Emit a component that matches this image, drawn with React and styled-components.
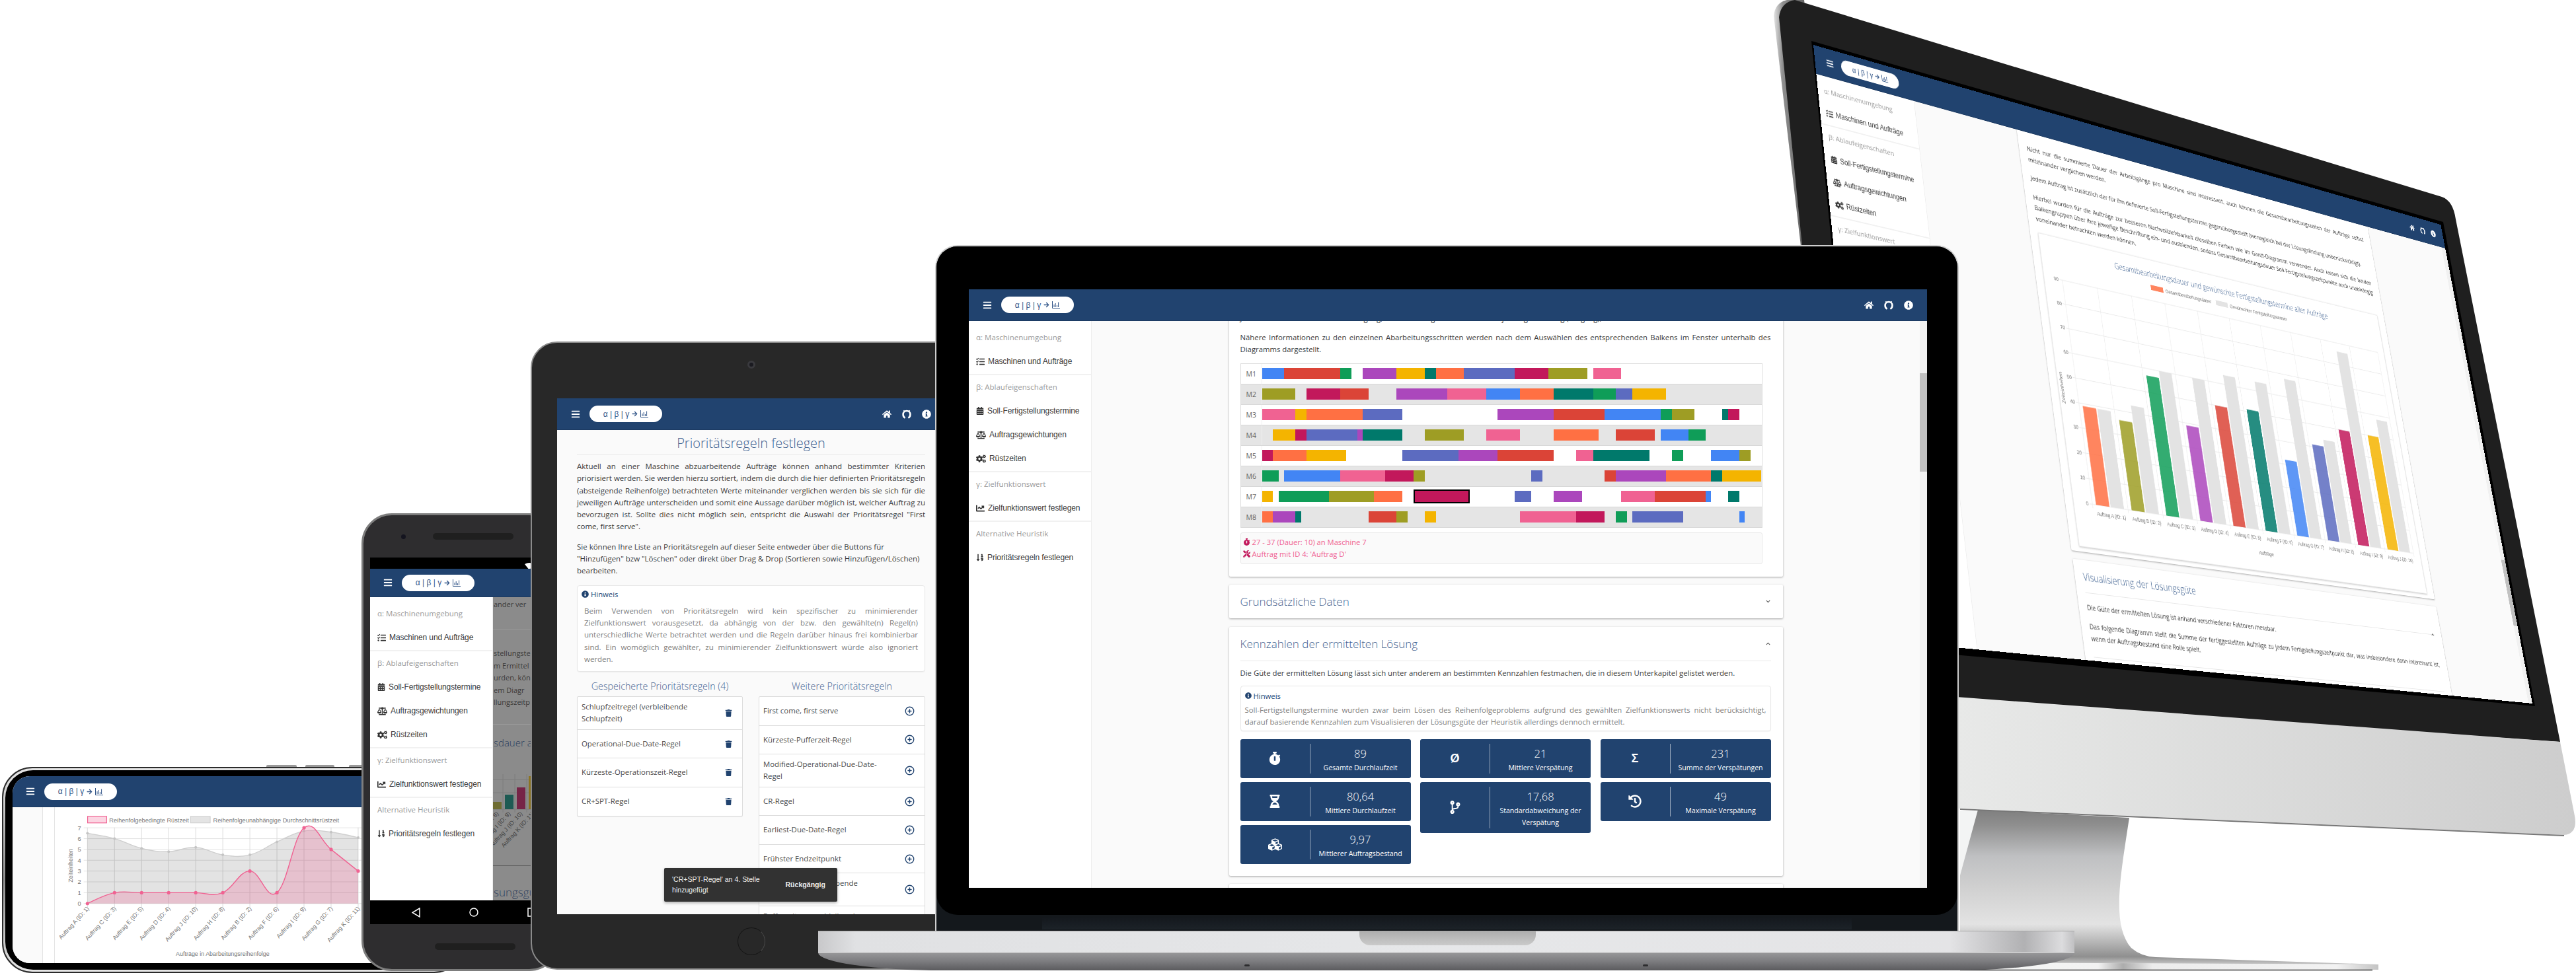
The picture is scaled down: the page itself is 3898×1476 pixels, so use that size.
import React from 'react';
import styled, { createGlobalStyle } from 'styled-components';
import {
  FaBars, FaHome, FaInfoCircle, FaArrowRight, FaTasks, FaCalendarAlt, FaBalanceScale, FaCogs,
  FaChartLine, FaSortNumericDown, FaStopwatch, FaHourglassHalf, FaCubes, FaHistory, FaCodeBranch,
  FaTrash, FaTools, FaChevronDown, FaChevronUp,
} from 'react-icons/fa';
import { CirclePlus } from 'lucide-react';

const NAVY = '#21436f';
const HEAD = '#3f6190';
const C = {
  blue: '#4285f4', red: '#db4437', green: '#0f9d58', purple: '#ab47bc', amber: '#f4b400', teal: '#00796b',
  orange: '#ff7043', indigo: '#5c6bc0', crimson: '#c2185b', olive: '#9e9d24', pink: '#f06292',
};

const Global = createGlobalStyle`
  html, body { margin: 0; padding: 0; background: #fff; }
  body { font-family: "Open Sans", "Liberation Sans", sans-serif; color: #333; }
  * { box-sizing: border-box; }
  p { margin: 0; }
`;

const Canvas = styled.div`
  position: relative;
  width: 3898px;
  height: 1476px;
  overflow: hidden;
  background: #fff;
`;

/* ---------- shared app chrome ---------- */
const HeaderBar = styled.header`
  flex: none;
  display: flex;
  align-items: center;
  height: ${p => p.$h || 48}px;
  padding: 0 21px 0 ${p => p.$pl || 21}px;
  background: ${NAVY};
  color: #fff;
  border-bottom: 1px solid #1b3960;
`;
const Burger = styled(FaBars)`
  flex: none;
  width: 14px;
  height: 14px;
`;
const LogoPill = styled.div`
  display: flex;
  align-items: center;
  justify-content: center;
  gap: 4px;
  width: 110px;
  height: 25px;
  margin-left: ${p => p.$ml || 14}px;
  border-radius: 13px;
  background: #fff;
  color: #35588a;
  font: 400 12px "Liberation Sans", sans-serif;
`;
const HeaderIcons = styled.div`
  margin-left: auto;
  display: flex;
  align-items: center;
  gap: 16px;
  font-size: 14px;
`;
const LogoChart = () => (
  <svg width="12" height="11" viewBox="0 0 12 11" fill="none" stroke="#35588a" strokeWidth="1">
    <path d="M.5 0v10.5H12M3 9V5M5.2 9V3M7.4 9V6M9.6 9V1.5" />
  </svg>
);
const GithubRing = () => (
  <svg width="14" height="14" viewBox="0 0 14 14" fill="none" stroke="#fff" strokeWidth="2.6">
    <path d="M4.6 12.6C2.6 11.5 1.6 9.5 1.6 7.4 1.6 4.2 4 2 7 2s5.4 2.2 5.4 5.4c0 2.1-1 4.1-3 5.2" />
    <path d="M2.4 1.2l1.4 1.6M11.6 1.2l-1.4 1.6" strokeWidth="1.6" />
  </svg>
);
const AppHeader = ({ h, pl, ml, iconsOnly }) => (
  <HeaderBar $h={h} $pl={pl}>
    <Burger />
    <LogoPill $ml={ml}>α | β | γ <FaArrowRight size={9} /> <LogoChart /></LogoPill>
    <HeaderIcons>
      <FaHome />
      {!iconsOnly && <GithubRing />}
      {!iconsOnly && <FaInfoCircle />}
    </HeaderIcons>
  </HeaderBar>
);

const SideColumn = styled.nav`
  flex: none;
  width: ${p => p.$w || 186}px;
  padding-top: 7px;
  background: #fff;
  border-right: 1px solid #eee;
  font: 400 12px "Liberation Sans", sans-serif;
`;
const SideSection = styled.section`
  padding-bottom: 1px;
  border-bottom: 2px solid #f1f1f1;
  &:last-child { border-bottom: 0; }
`;
const SideLabel = styled.div`
  height: 36px;
  padding-left: 11px;
  line-height: 36px;
  color: #9a9a9a;
  font-family: "Open Sans", sans-serif;
  font-size: 11.5px;
  white-space: nowrap;
`;
const SideItem = styled.div`
  display: flex;
  align-items: center;
  gap: 5px;
  height: 36px;
  padding-left: 11px;
  color: #3a3a3a;
  white-space: nowrap;
  letter-spacing: -0.1px;
  svg { flex: none; color: #333; }
`;
const Sidebar = () => (
  <SideColumn>
    <SideSection>
      <SideLabel>α: Maschinenumgebung</SideLabel>
      <SideItem><FaTasks size={13} />Maschinen und Aufträge</SideItem>
    </SideSection>
    <SideSection>
      <SideLabel>β: Ablaufeigenschaften</SideLabel>
      <SideItem><FaCalendarAlt size={12} />Soll-Fertigstellungstermine</SideItem>
      <SideItem><FaBalanceScale size={15} />Auftragsgewichtungen</SideItem>
      <SideItem><FaCogs size={15} />Rüstzeiten</SideItem>
    </SideSection>
    <SideSection>
      <SideLabel>γ: Zielfunktionswert</SideLabel>
      <SideItem><FaChartLine size={13} />Zielfunktionswert festlegen</SideItem>
    </SideSection>
    <SideSection>
      <SideLabel>Alternative Heuristik</SideLabel>
      <SideItem><FaSortNumericDown size={12} />Prioritätsregeln festlegen</SideItem>
    </SideSection>
  </SideColumn>
);

const PageBody = styled.div`
  flex: 1;
  min-height: 0;
  display: flex;
  background: #fafafa;
`;
const ScrollArea = styled.main`
  flex: 1;
  min-width: 0;
  overflow: hidden;
  display: flex;
  flex-direction: column;
  align-items: center;
`;
const ScrollTrack = styled.div`
  flex: none;
  width: 11px;
  padding-top: ${p => p.$top}px;
  background: #f1f1f1;
`;
const ScrollThumb = styled.div`
  height: ${p => p.$h}px;
  background: #c1c1c1;
`;
const Card = styled.section`
  flex: none;
  width: 838px;
  margin-top: ${p => p.$mt || 0}px;
  padding: ${p => p.$pt || 0}px 18px ${p => p.$pb || 0}px 17px;
  background: #fff;
  box-shadow: 0 1px 3px rgba(0,0,0,.35);
  border-radius: 2px;
`;
const CardHead = styled.div`
  display: flex;
  align-items: center;
  justify-content: space-between;
  height: ${p => p.$h}px;
  color: ${HEAD};
  font-size: 17px;
  font-weight: 300;
  svg { color: #555; margin-right: 1px; }
`;
const Rule = styled.hr`
  margin: ${p => p.$mt || 0}px 0 0;
  border: 0;
  border-top: 1px solid #e8e8e8;
`;
const Para = styled.p`
  margin-top: ${p => p.$mt || 0}px;
  font-size: ${p => p.$fs || 11.35}px;
  line-height: ${p => p.$lh || 18.5}px;
  text-align: ${p => (p.$left ? 'left' : 'justify')};
  color: #3b3b3b;
`;
const HintBox = styled.div`
  margin-top: ${p => p.$mt || 0}px;
  padding: ${p => p.$p || '6px 6px 3px'};
  border: 1px solid #e7e7e7;
  border-radius: 4px;
  background: #fff;
  box-shadow: 0 1px 1px rgba(0,0,0,.04);
`;
const HintHead = styled.div`
  display: flex;
  align-items: center;
  gap: 3px;
  height: 16px;
  color: ${NAVY};
  font-size: 11.3px;
`;
const HintText = styled.p`
  margin-top: 5px;
  font-size: 11.35px;
  line-height: 18.3px;
  color: #808080;
  text-align: justify;
`;
const TabletHintText = styled(HintText)`
  margin: 8px 0 0 4px;
  font-size: 11.5px;
`;

/* ---------- gantt ---------- */
const GANTT = [
  [['blue',0,4],['red',4,14],['green',14,16],['purple',18,24],['amber',24,29],['teal',29,31],['orange',31,36],['indigo',36,45],['crimson',45,51],['olive',51,58],['pink',59,64]],
  [['olive',0,6],['crimson',8,14],['red',14,19],['purple',24,33],['pink',33,40],['blue',40,46],['orange',46,52],['teal',52,59],['green',59,63],['indigo',63,66],['amber',66,72]],
  [['pink',0,6],['amber',6,8],['orange',8,18],['indigo',18,25],['purple',42,52],['red',52,61],['blue',61,71],['green',71,73],['olive',73,77],['teal',82,83],['crimson',83,85]],
  [['amber',2,6],['crimson',6,8],['indigo',8,17],['purple',17,18],['teal',18,25],['olive',29,36],['pink',40,46],['orange',52,60],['red',63,70],['blue',71,76],['green',76,79]],
  [['crimson',0,2],['orange',2,8],['amber',8,15],['indigo',25,35],['purple',35,42],['red',42,52],['pink',56,59],['teal',59,69],['green',73,75],['blue',80,85],['olive',85,87]],
  [['green',0,3],['blue',4,14],['pink',14,22],['crimson',22,27],['olive',27,29],['indigo',48,50],['red',61,63],['purple',63,72],['orange',72,80],['teal',80,82],['amber',82,89]],
  [['amber',0,2],['green',3,12],['olive',12,20],['orange',20,25],['crimson',27,37,true],['indigo',45,48],['purple',52,57],['pink',64,70],['red',70,79],['blue',79,80],['teal',83,85]],
  [['orange',0,2],['purple',2,6],['teal',6,7],['red',19,24],['olive',24,26],['amber',29,31],['pink',46,56],['crimson',56,61],['green',63,65],['indigo',66,75],['blue',85,86]],
];
const GanttBox = styled.div`
  width: 790px;
  margin-top: 11px;
  border: 1px solid #dedede;
  border-bottom: 0;
`;
const GanttRow = styled.div`
  display: flex;
  height: 31px;
  background: ${p => (p.$odd ? '#e5e5e5' : '#fff')};
  border-bottom: 1px solid #d8d8d8;
`;
const GanttLabel = styled.div`
  flex: none;
  width: 32px;
  line-height: 30px;
  padding-left: 8px;
  font-size: 10.5px;
  color: #666;
  border-right: 1px solid #f0f0f0;
`;
const GanttTrack = styled.div`
  flex: 1;
  display: grid;
  grid-template-columns: repeat(89, 1fr);
  align-items: center;
`;
const GanttBar = styled.div`
  grid-row: 1;
  grid-column: ${p => p.$s + 1} / ${p => p.$e + 1};
  height: ${p => (p.$sel ? 21 : 17)}px;
  background: ${p => C[p.$c]};
  border: ${p => (p.$sel ? '2px solid #000' : 0)};
`;
const Gantt = () => (
  <GanttBox>
    {GANTT.map((row, i) => (
      <GanttRow key={i} $odd={i % 2 === 1}>
        <GanttLabel>M{i + 1}</GanttLabel>
        <GanttTrack>
          {row.map(([c, s, e, sel]) => <GanttBar key={s} $c={c} $s={s} $e={e} $sel={sel} />)}
        </GanttTrack>
      </GanttRow>
    ))}
  </GanttBox>
);
const InfoBox = styled.div`
  width: 790px;
  margin: 7px 0 19px;
  padding: 5px 3px;
  background: #fafafa;
  border: 1px solid #e9e9e9;
  border-radius: 3px;
`;
const InfoLine = styled.div`
  display: flex;
  align-items: center;
  gap: 3px;
  height: 18px;
  color: ${C.pink};
  font-size: 11.2px;
  svg { color: ${C.crimson}; }
`;

/* ---------- KPI ---------- */
const KpiGrid = styled.div`
  display: flex;
  justify-content: space-between;
  align-items: flex-start;
  margin-top: 12px;
`;
const KpiCol = styled.div`
  display: flex;
  flex-direction: column;
  gap: 6px;
  width: 258px;
`;
const Kpi = styled.div`
  display: flex;
  align-items: stretch;
  padding: 7px 0;
  background: ${NAVY};
  border-radius: 3px;
  color: #fff;
`;
const KpiIcon = styled.div`
  flex: none;
  width: 106px;
  display: flex;
  align-items: center;
  justify-content: center;
  font: 700 18px "Liberation Sans", sans-serif;
  border-right: 1px solid rgba(255,255,255,.55);
`;
const KpiText = styled.div`
  flex: 1;
  min-width: 0;
  padding: 3px 4px 0;
  text-align: center;
`;
const KpiValue = styled.div`
  font-size: 16.5px;
  font-weight: 300;
  line-height: 24px;
`;
const KpiLabel = styled.div`
  font-size: 10.6px;
  line-height: 18px;
  letter-spacing: -0.05px;
`;
const Tile = ({ icon, value, label }) => (
  <Kpi>
    <KpiIcon>{icon}</KpiIcon>
    <KpiText><KpiValue>{value}</KpiValue><KpiLabel>{label}</KpiLabel></KpiText>
  </Kpi>
);

/* ---------- framed screen with app ---------- */
const AppPage = styled.div`
  display: flex;
  flex-direction: column;
  width: 100%;
  height: 100%;
  overflow: hidden;
  background: #fafafa;
`;
const ScrolledCard = styled(Card)`
  margin-top: -13px;
`;

const LaptopPage = () => (
  <AppPage>
    <AppHeader />
    <PageBody>
      <Sidebar />
      <ScrollArea>
        <ScrolledCard>
          <Para>Jeder Balken steht für einen Arbeitsgang, die Farben ergeben sich aus dem jeweiligen Auftrag (Vorgang), welcher bearbeitet wird.</Para>
          <Para $mt={10}>Nähere Informationen zu den einzelnen Abarbeitungsschritten werden nach dem Auswählen des entsprechenden Balkens im Fenster unterhalb des Diagramms dargestellt.</Para>
          <Gantt />
          <InfoBox>
            <InfoLine><FaStopwatch size={11} />27 - 37 (Dauer: 10) an Maschine 7</InfoLine>
            <InfoLine><FaTools size={11} />Auftrag mit ID 4: 'Auftrag D'</InfoLine>
          </InfoBox>
        </ScrolledCard>
        <Card $mt={12}>
          <CardHead $h={51}>Grundsätzliche Daten <FaChevronDown size={7} /></CardHead>
        </Card>
        <Card $mt={13} $pb={18}>
          <CardHead $h={51}>Kennzahlen der ermittelten Lösung <FaChevronUp size={7} /></CardHead>
          <Rule />
          <Para $mt={9}>Die Güte der ermittelten Lösung lässt sich unter anderem an bestimmten Kennzahlen festmachen, die in diesem Unterkapitel gelistet werden.</Para>
          <HintBox $mt={10}>
            <HintHead><FaInfoCircle size={10} />Hinweis</HintHead>
            <HintText>Soll-Fertigstellungstermine wurden zwar beim Lösen des Reihenfolgeproblems aufgrund des gewählten Zielfunktionswerts nicht berücksichtigt, darauf basierende Kennzahlen zum Visualisieren der Lösungsgüte der Heuristik allerdings dennoch ermittelt.</HintText>
          </HintBox>
          <KpiGrid>
            <KpiCol>
              <Tile icon={<FaStopwatch size={20} />} value="89" label="Gesamte Durchlaufzeit" />
              <Tile icon={<FaHourglassHalf size={20} />} value="80,64" label="Mittlere Durchlaufzeit" />
              <Tile icon={<FaCubes size={21} />} value="9,97" label="Mittlerer Auftragsbestand" />
            </KpiCol>
            <KpiCol>
              <Tile icon="Ø" value="21" label="Mittlere Verspätung" />
              <Tile icon={<FaCodeBranch size={20} />} value="17,68" label="Standardabweichung der Verspätung" />
            </KpiCol>
            <KpiCol>
              <Tile icon="Σ" value="231" label="Summe der Verspätungen" />
              <Tile icon={<FaHistory size={20} />} value="49" label="Maximale Verspätung" />
            </KpiCol>
          </KpiGrid>
        </Card>
        <Card $mt={12} $pt={40} />
      </ScrollArea>
      <ScrollTrack $top={79}><ScrollThumb $h={149} /></ScrollTrack>
    </PageBody>
  </AppPage>
);

/* ---------- monitor bar chart ---------- */
const BARS = [
  ['A', 1, 'orange', 39, 39], ['B', 2, 'olive', 36, 43], ['C', 3, 'green', 57, 60], ['D', 4, 'purple', 39, 60],
  ['E', 5, 'red', 50, 64], ['F', 6, 'teal', 51, 64], ['G', 7, 'blue', 32, 68], ['H', 8, 'indigo', 41, 44],
  ['I', 9, 'crimson', 50, 86], ['J', 10, 'amber', 50, 58],
];
const ChartBox = styled.div`
  height: 509px;
  margin-top: 15px;
  background: #fff;
  border: 1px solid #eee;
  box-shadow: 0 1px 3px rgba(0,0,0,.25);
  svg { display: block; }
`;
const BarChart = () => {
  const x0 = 38, x1 = 785, y0 = 438, y9 = 72;
  const step = (x1 - x0) / 10;
  const py = v => y0 - ((y0 - y9) * v) / 90;
  return (
    <ChartBox>
      <svg width="803" height="507" viewBox="0 0 803 507" fontFamily="Liberation Sans, sans-serif">
        <text x="412" y="30" textAnchor="middle" fontFamily="Open Sans" fontSize="14" fontWeight="300" fill={HEAD}>Gesamtbearbeitungsdauer und gewünschte Fertigstellungstermine aller Aufträge</text>
        <rect x="235" y="44" width="28" height="9" fill={C.orange} opacity=".85" />
        <text x="268" y="52" fontSize="9" fill="#777">Gesamtbearbeitungsdauer</text>
        <rect x="385" y="44" width="28" height="9" fill="#e3e3e3" />
        <text x="418" y="52" fontSize="9" fill="#777">Gewünschter Fertigstellungstermin</text>
        {Array.from({ length: 10 }, (_, i) => (
          <g key={i}>
            <line x1={x0 - 6} x2={x1} y1={py(i * 10)} y2={py(i * 10)} stroke="#e8e8e8" />
            <text x={x0 - 8} y={py(i * 10) + 3} textAnchor="end" fontSize="9" fill="#777">{i * 10}</text>
          </g>
        ))}
        {Array.from({ length: 11 }, (_, i) => (
          <line key={i} x1={x0 + step * i} x2={x0 + step * i} y1={y9} y2={y0 + 6} stroke="#ececec" />
        ))}
        {BARS.map(([n, id, c, a, b], i) => (
          <g key={n}>
            <rect x={x0 + step * i + 7.5} y={py(a)} width="28" height={y0 - py(a)} fill={C[c]} opacity=".85" />
            <rect x={x0 + step * i + 38} y={py(b)} width="28" height={y0 - py(b)} fill="#e3e3e3" />
            <text x={x0 + step * i + step / 2} y={y0 + 17} textAnchor="middle" fontSize="8.5" fill="#777">Auftrag {n} (ID: {id})</text>
          </g>
        ))}
        <text x="412" y={y0 + 42} textAnchor="middle" fontSize="9" fill="#777">Aufträge</text>
        <text transform={`translate(10 ${(y0 + y9) / 2}) rotate(-90)`} textAnchor="middle" fontSize="9" fill="#777">Zeiteinheiten</text>
      </svg>
    </ChartBox>
  );
};

const MonitorPage = () => (
  <AppPage>
    <AppHeader />
    <PageBody>
      <Sidebar />
      <ScrollArea>
        <Card $pt={20} $pb={8}>
          <Para>Nicht nur die summierte Dauer der Arbeitsgänge pro Maschine sind interessant, auch können die Gesamtbearbeitungszeiten der Aufträge selbst miteinander verglichen werden.</Para>
          <Para $mt={14}>Jedem Auftrag ist zusätzlich der für ihn definierte Soll-Fertigstellungstermin gegenübergestellt (wenngleich bei der Lösungsfindung unberücksichtigt).</Para>
          <Para $mt={14}>Hierbei wurden für die Aufträge zur besseren Nachvollziehbarkeit dieselben Farben wie im Gantt-Diagramm verwendet. Auch lassen sich die beiden Balkengruppen über ihre jeweilige Beschriftung ein- und ausblenden, sodass Gesamtbearbeitungsdauer Soll-Fertigstellungszeitpunkte auch unabhängig voneinander betrachten werden können.</Para>
          <BarChart />
        </Card>
        <Card $mt={13} $pb={40}>
          <CardHead $h={50}>Visualisierung der Lösungsgüte <span /></CardHead>
          <CardHead $h={0}><span /><FaChevronUp size={7} /></CardHead>
          <Rule />
          <Para $mt={13}>Die Güte der ermittelten Lösung ist anhand verschiedener Faktoren messbar.</Para>
          <Para $mt={10}>Das folgende Diagramm stellt die Summe der fertiggestellten Aufträge zu jedem Fertigstellungszeitpunkt dar, was insbesondere dann interessant ist, wenn der Auftragsbestand eine Rolle spielt.</Para>
          <Rule $mt={18} />
        </Card>
      </ScrollArea>
      <ScrollTrack $top={600}><ScrollThumb $h={120} /></ScrollTrack>
    </PageBody>
  </AppPage>
);

/* ---------- monitor ---------- */
const Chassis = styled.svg`
  position: absolute;
  left: 0;
  top: 0;
`;
const MonitorBody = () => (
  <Chassis width="3898" height="1476" viewBox="0 0 3898 1476">
    <defs>
      <linearGradient id="chin" x1="2960" x2="3898" y1="0" y2="0" gradientUnits="userSpaceOnUse">
        <stop offset="0" stopColor="#e8e9e8" /><stop offset="1" stopColor="#cdcdcd" />
      </linearGradient>
      <linearGradient id="neck" x1="0" x2="0" y1="1226" y2="1460" gradientUnits="userSpaceOnUse">
        <stop offset="0" stopColor="#7f7f7f" /><stop offset=".1" stopColor="#8f8f8f" /><stop offset=".3" stopColor="#bfc0c2" />
        <stop offset=".5" stopColor="#d0d0d0" /><stop offset=".74" stopColor="#e3e3e3" /><stop offset=".86" stopColor="#b4b4b4" />
        <stop offset=".95" stopColor="#8f8f8f" /><stop offset="1" stopColor="#c8c8c8" />
      </linearGradient>
      <linearGradient id="foot" x1="2966" x2="3599" y1="0" y2="0" gradientUnits="userSpaceOnUse">
        <stop offset="0" stopColor="#f4f6f5" /><stop offset=".33" stopColor="#f2f2f2" /><stop offset=".39" stopColor="#acacac" />
        <stop offset=".46" stopColor="#ececec" /><stop offset=".9" stopColor="#f2f2f2" /><stop offset="1" stopColor="#c4c4c4" />
      </linearGradient>
      <linearGradient id="rim" x1="2684" x2="2730" y1="0" y2="0" gradientUnits="userSpaceOnUse">
        <stop offset="0" stopColor="#e4e4e4" /><stop offset=".3" stopColor="#8e8e8e" /><stop offset="1" stopColor="#666" />
      </linearGradient>
    </defs>
    <path d="M2684 24Q2686 4 2704 0L2730 0L2790 500L2740 500Z" fill="url(#rim)" />
    <path d="M2692 26Q2695 3 2716 0L3695 298Q3712 304 3716 332L3874 1123L2800 1050L2740 500Z" fill="#1f1f1f" />
    <path d="M2741 62L3697 336L3836 1069L2832 980Z" fill="#000" />
    <path d="M2966 1228L2993 1228L2966 1325Z" fill="#f3f4f4" />
    <path d="M2993 1226L3222 1238C3208 1330 3195 1400 3225 1435Q3240 1448 3262 1449L3599 1460L2966 1458L2966 1325Z" fill="url(#neck)" />
    <path d="M2966 1457L3599 1460L3599 1468L2966 1468Z" fill="url(#foot)" />
    <path d="M2966 1468.5L3590 1468.5" stroke="#3d3d3d" strokeWidth="1.5" />
    <path d="M2786 1042L3874 1123L3896 1235Q3901 1262 3880 1264L2966 1224L2800 1220Z" fill="url(#chin)" />
    <path d="M2966 1225L3880 1265" stroke="#777" strokeWidth="2" fill="none" />
  </Chassis>
);
const TiltedScreen = styled.div`
  position: absolute;
  left: 0;
  top: 0;
  width: ${p => p.$w}px;
  height: ${p => p.$h}px;
  transform-origin: 0 0;
`;
function homography(W, H, [[x0, y0], [x1, y1], [x2, y2], [x3, y3]]) {
  const dx1 = x1 - x2, dx2 = x3 - x2, sx = x0 - x1 + x2 - x3;
  const dy1 = y1 - y2, dy2 = y3 - y2, sy = y0 - y1 + y2 - y3;
  const den = dx1 * dy2 - dx2 * dy1;
  const g = (sx * dy2 - dx2 * sy) / den;
  const h = (dx1 * sy - sx * dy1) / den;
  const a = x1 - x0 + g * x1, b = x3 - x0 + h * x3;
  const d = y1 - y0 + g * y1, e = y3 - y0 + h * y3;
  return `matrix3d(${a / W},${d / W},0,${g / W},${b / H},${e / H},0,${h / H},0,0,1,0,${x0},${y0},0,1)`;
}

/* ---------- landscape phone ---------- */
const IPhoneShell = styled.div`
  position: absolute;
  left: 3px;
  top: 1161px;
  width: 700px;
  height: 312px;
  padding: 3px;
  border: 2px solid #2b2b2b;
  border-radius: 46px;
  background: linear-gradient(#e6e6e6, #8d8d8d 55%, #e6e6e6);
`;
const IPhoneInner = styled.div`
  height: 100%;
  padding: 9px 0 10px 11px;
  border-radius: 42px;
  background: #000;
`;
const IPhoneScreen = styled.div`
  display: flex;
  flex-direction: column;
  height: 100%;
  overflow: hidden;
  border-radius: 26px 0 0 26px;
  background: #fff;
`;
const SideKey = styled.div`
  position: absolute;
  left: ${p => p.$x}px;
  top: 1158px;
  width: ${p => p.$w}px;
  height: 3px;
  background: #999;
  border-radius: 2px 2px 0 0;
`;
const PhoneChartRow = styled.div`
  flex: 1;
  min-height: 0;
  display: flex;
`;
const Gutter = styled.div`
  flex: none;
  width: ${p => p.$w}px;
  background: ${p => p.$bg};
  border-right: 1px solid #e4e4e4;
`;
const spline = pts => {
  let d = `M${pts[0][0]} ${pts[0][1]}`;
  for (let i = 0; i < pts.length - 1; i++) {
    const p0 = pts[i - 1] || pts[i], p1 = pts[i], p2 = pts[i + 1], p3 = pts[i + 2] || p2;
    const t = 0.2;
    d += `C${p1[0] + (p2[0] - p0[0]) * t} ${p1[1] + (p2[1] - p0[1]) * t} ${p2[0] - (p3[0] - p1[0]) * t} ${p2[1] - (p3[1] - p1[1]) * t} ${p2[0]} ${p2[1]}`;
  }
  return d;
};
const PHONE_LABELS = ['A (ID: 1)', 'C (ID: 3)', 'E (ID: 5)', 'D (ID: 4)', 'J (ID: 10)', 'H (ID: 8)', 'B (ID: 2)', 'F (ID: 6)', 'I (ID: 9)', 'G (ID: 7)', 'K (ID: 11)'];
const AreaChart = () => {
  const px = i => 132.7 + i * 41.3;
  const py = v => 1372 - v * 16.5;
  const pink = [0, 1, 1, 1, 1, 1, 3, 1, 7, 5, 3].map((v, i) => [px(i), py(v)]);
  const gray = [6.5, 6, 5.1, 4.8, 5.2, 4.5, 4.5, 5.7, 6.7, 6.6, 6.1].map((v, i) => [px(i), py(v)]);
  const close = ` L${px(10)} 1372 L${px(0)} 1372Z`;
  return (
    <svg width="620" height="230" viewBox="83 1226 620 230" fontFamily="Liberation Sans, sans-serif">
      <rect x="133" y="1239" width="29" height="10" fill="#fbd5e2" stroke={C.pink} strokeWidth="1.2" />
      <text x="166" y="1248" fontSize="9.3" fill="#777">Reihenfolgebedingte Rüstzeit</text>
      <rect x="290" y="1239" width="30" height="10" fill="#e4e4e4" stroke="#ccc" />
      <text x="324.5" y="1248" fontSize="9.3" fill="#777">Reihenfolgeunabhängige Durchschnittsrüstzeit</text>
      {[0, 1, 2, 3, 4, 5, 6, 7].map(v => (
        <g key={v}>
          <line x1="127" x2="560" y1={py(v)} y2={py(v)} stroke="#e3e3e3" />
          <text x="123" y={py(v) + 3.5} textAnchor="end" fontSize="9.5" fill="#777">{v}</text>
        </g>
      ))}
      {pink.map((p, i) => <line key={i} x1={p[0]} x2={p[0]} y1="1256" y2="1378" stroke="#dcdcdc" />)}
      <path d={spline(gray) + close} fill="rgba(0,0,0,.11)" />
      <path d={spline(gray)} fill="none" stroke="#cfcfcf" strokeWidth="1.4" />
      {gray.map((p, i) => <circle key={i} cx={p[0]} cy={p[1]} r="2" fill="#c4c4c4" />)}
      <path d={spline(pink) + close} fill="rgba(240,98,146,.26)" />
      <path d={spline(pink)} fill="none" stroke={C.pink} strokeWidth="1.4" />
      {pink.map((p, i) => <circle key={i} cx={p[0]} cy={p[1]} r="2.6" fill={C.pink} />)}
      {pink.map((p, i) => (
        <text key={i} transform={`translate(${p[0] + 3} 1380) rotate(-48)`} textAnchor="end" fontSize="9" fill="#777">Auftrag {PHONE_LABELS[i]}</text>
      ))}
      <text x="339" y="1452" textAnchor="middle" fontSize="9" fill="#777">Aufträge in Abarbeitungsreihenfolge</text>
      <text transform="translate(110 1314) rotate(-90)" textAnchor="middle" fontSize="9" fill="#777">Zeiteinheiten</text>
    </svg>
  );
};

/* ---------- android ---------- */
const AndroidShell = styled.div`
  position: absolute;
  left: 547px;
  top: 777px;
  width: 300px;
  height: 693px;
  display: flex;
  flex-direction: column;
  padding-left: 10px;
  background: #2e2d2f;
  border: 3px solid #7d7d7d;
  border-radius: 46px;
`;
const AndroidBezel = styled.div`
  flex: none;
  display: flex;
  align-items: center;
  gap: 41px;
  height: ${p => p.$h}px;
  padding-left: ${p => p.$pl}px;
`;
const Lens = styled.div`
  width: 7px;
  height: 7px;
  border-radius: 50%;
  background: #14141f;
`;
const SpeakerSlot = styled.div`
  width: 122px;
  height: 10px;
  border-radius: 5px;
  background: #1f1f1f;
`;
const AndroidScreen = styled.div`
  flex: none;
  display: flex;
  flex-direction: column;
  width: 287px;
  height: 555px;
`;
const StatusBar = styled.div`
  flex: none;
  height: 17px;
  padding: 2px 0 0 234px;
  background: #000;
`;
const DrawerRow = styled.div`
  flex: none;
  height: 459px;
  display: flex;
  overflow: hidden;
`;
const DimPane = styled.div`
  flex: 1;
  min-width: 0;
  padding-top: 2px;
  overflow: hidden;
  background: #8b8b8b;
  color: #3a3a3a;
  font-size: 10.5px;
  white-space: nowrap;
`;
const DimLine = styled.div`
  height: 18.4px;
  line-height: 18.4px;
  margin-top: ${p => p.$mt || 0}px;
  padding-left: 1px;
  color: ${p => p.$c || 'inherit'};
  font-size: ${p => p.$fs || 11}px;
  font-weight: ${p => p.$fw || 400};
`;
const DimDivider = styled.div`
  height: 1px;
  margin-top: ${p => p.$mt}px;
  background: ${p => p.$c || '#9b9b9b'};
`;
const DimChartWrap = styled.div`
  margin-top: 38px;
  svg { display: block; }
`;
const NavBar = styled.div`
  flex: none;
  height: 36px;
  display: flex;
  align-items: center;
  gap: 74px;
  padding-left: 63px;
  background: #000;
  svg { flex: none; }
`;
const DimChart = () => (
  <DimChartWrap>
    <svg width="90" height="140" viewBox="746 1172 90 140" fontFamily="Liberation Sans, sans-serif">
      {[1180, 1200, 1225].map(y => <line key={y} x1="746" x2="836" y1={y} y2={y} stroke="#7d7d7d" />)}
      {[761, 779, 797].map(x => <line key={x} x1={x} x2={x} y1="1172" y2="1230" stroke="#7d7d7d" />)}
      <rect x="746" y="1214" width="13" height="11" fill="#6f6d33" />
      <rect x="764" y="1203" width="13" height="22" fill="#1d5a53" />
      <rect x="782" y="1192" width="13" height="33" fill="#762447" />
      <rect x="800" y="1175" width="13" height="50" fill="#8d7420" />
      {['H (ID: 8)', 'I (ID: 9)', 'J (ID: 10)', 'K (ID: 11)'].map((t, i) => (
        <text key={t} transform={`translate(${755 + i * 18} 1232) rotate(-48)`} textAnchor="end" fontSize="9" fill="#3f3f3f">Auftrag {t}</text>
      ))}
    </svg>
  </DimChartWrap>
);

/* ---------- tablet ---------- */
const TabletShell = styled.div`
  position: absolute;
  left: 803px;
  top: 517px;
  width: 680px;
  height: 951px;
  padding-left: 38px;
  background: #282828;
  border: 2px solid #8b8b8b;
  border-radius: 40px;
`;
const TabletBezel = styled.div`
  height: ${p => p.$h}px;
  width: 587px;
  display: flex;
  align-items: center;
  justify-content: center;
`;
const TabletCam = styled.div`
  width: 12px;
  height: 12px;
  margin-bottom: 18px;
  border-radius: 50%;
  border: 3px solid #3a3a3e;
  background: #1a1a20;
`;
const HomeRing = styled.div`
  width: 42px;
  height: 42px;
  margin-bottom: 2px;
  border-radius: 50%;
  border: 1.5px solid #151515;
  border-right-color: #4b4b4b;
`;
const TabletScreen = styled.div`
  position: relative;
  display: flex;
  flex-direction: column;
  width: 587px;
  height: 781px;
  overflow: hidden;
  background: #fafafa;
`;
const TabletBody = styled.div`
  padding: 0 30px;
`;
const TabletTitle = styled.h1`
  margin: 0;
  height: 38px;
  line-height: 39px;
  text-align: center;
  font-size: 20px;
  font-weight: 300;
  color: ${HEAD};
  border-bottom: 1px solid #e9e9e9;
`;
const ListGrid = styled.div`
  display: grid;
  grid-template-columns: 251px 252px;
  gap: 24px;
  margin-top: 12px;
`;
const ListTitle = styled.h2`
  margin: 0;
  height: 25px;
  line-height: 20px;
  text-align: center;
  font-size: 14.3px;
  font-weight: 300;
  color: ${HEAD};
`;
const RuleList = styled.div`
  border: 1px solid #ddd;
  border-radius: 2px;
  background: #fff;
  box-shadow: 0 1px 1px rgba(0,0,0,.06);
`;
const RuleRow = styled.div`
  display: flex;
  align-items: center;
  justify-content: space-between;
  min-height: 43.5px;
  padding: 6px 15px 6px 6px;
  border-bottom: 1px solid #ddd;
  font-size: 11.4px;
  line-height: 18.3px;
  color: #4a4a4a;
  &:last-child { border-bottom: 0; }
  svg { flex: none; color: ${NAVY}; margin-left: 20px; }
`;
const Snackbar = styled.div`
  position: absolute;
  left: 162px;
  top: 711px;
  width: 262px;
  height: 51px;
  display: flex;
  align-items: center;
  justify-content: space-between;
  padding: 0 18px 0 12px;
  background: #323232;
  color: #ededed;
  border-radius: 2px;
  font: 400 10.6px/15.5px "Liberation Sans", sans-serif;
  box-shadow: 0 2px 4px rgba(0,0,0,.3);
`;
const SnackText = styled.span`
  width: 150px;
`;
const SnackAction = styled.span`
  font-weight: 700;
`;

/* ---------- laptop ---------- */
const LaptopLid = styled.div`
  position: absolute;
  left: 1415px;
  top: 371px;
  width: 1549px;
  height: 1038px;
  display: flex;
  flex-direction: column;
  border: 2px solid #cfcfcf;
  border-bottom: 0;
  border-radius: 34px 34px 0 0;
  background: #14181c;
`;
const LaptopBezel = styled.div`
  flex: none;
  height: 1012px;
  padding: 65px 46px 39px 49px;
  background: #000;
  border-radius: 32px;
`;
const LaptopScreen = styled.div`
  width: 1450px;
  height: 906px;
`;
const Hinge = styled.div`
  flex: 1;
  margin: 4px 160px 2px;
  background: linear-gradient(#14181d, #1c2228);
`;
const LaptopBase = styled.div`
  position: absolute;
  left: 1238px;
  top: 1409px;
  width: 1901px;
  height: 60px;
  display: flex;
  flex-direction: column;
`;
const BaseTop = styled.div`
  position: relative;
  flex: none;
  height: 33px;
  border-top: 1px solid #a8a8a8;
  border-bottom: 1px solid #f3f3f3;
  background: linear-gradient(90deg, #c8c8ca 0%, #e0e1e3 3%, #e6e7e9 50%, #e4e4e6 90%, #b1b1b3 96%, #dcdcde 99%, #c0c0c2 100%);
`;
const Notch = styled.div`
  position: absolute;
  left: 819px;
  top: 0;
  width: 267px;
  height: 21px;
  background: linear-gradient(#aeaeae, #cacaca);
  border-radius: 0 0 16px 16px;
`;
const BaseBottom = styled.div`
  flex: 1;
  display: flex;
  justify-content: center;
  align-items: flex-end;
  gap: 595px;
  padding-bottom: 6px;
  border-radius: 0 0 190px 190px / 0 0 27px 27px;
  background: linear-gradient(#98989a, #7f7f82 45%, #5b5b5e);
`;
const Pinhole = styled.div`
  width: 8px;
  height: 3px;
  border-radius: 2px;
  background: #2c2c2e;
`;

const Rules1 = ['Schlupfzeitregel (verbleibende Schlupfzeit)', 'Operational-Due-Date-Regel', 'Kürzeste-Operationszeit-Regel', 'CR+SPT-Regel'];
const Rules2 = ['First come, first serve', 'Kürzeste-Pufferzeit-Regel', 'Modified-Operational-Due-Date-Regel', 'CR-Regel', 'Earliest-Due-Date-Regel', 'Frühster Endzeitpunkt', 'Schlupfzeit je verbleibende Operation (S/OPN)', 'Pufferzeit pro verbleibendem Arbeitsgang'];

export default function App() {
  const tilt = homography(1450, 906, [[2744, 68], [3693, 340], [3832, 1065], [2835, 968]]);
  return (
    <Canvas>
      <Global />
      <MonitorBody />
      <TiltedScreen $w={1450} $h={906} style={{ transform: tilt }}><MonitorPage /></TiltedScreen>

      <SideKey $x={403} $w={46} />
      <SideKey $x={462} $w={44} />
      <SideKey $x={528} $w={30} />
      <IPhoneShell>
        <IPhoneInner>
          <IPhoneScreen>
            <AppHeader h={47} pl={20} ml={14} iconsOnly />
            <PhoneChartRow>
              <Gutter $w={46} $bg="#fafafa" />
              <Gutter $w={18} $bg="#fff" />
              <AreaChart />
            </PhoneChartRow>
          </IPhoneScreen>
        </IPhoneInner>
      </IPhoneShell>

      <AndroidShell>
        <AndroidBezel $h={64} $pl={47}><Lens /><SpeakerSlot /></AndroidBezel>
        <AndroidScreen>
          <StatusBar>
            <svg width="14" height="11" viewBox="0 0 14 11"><path d="M0 2Q7-2 14 2L7 11Z" fill="#fff" /></svg>
          </StatusBar>
          <AppHeader h={43} pl={20} ml={14} iconsOnly />
          <DrawerRow>
            <Sidebar />
            <DimPane>
              <DimLine>ander ver</DimLine>
              <DimDivider $mt={29} />
              <DimLine $mt={26}>stellungster</DimLine>
              <DimLine>m Ermittel</DimLine>
              <DimLine>urden, kön</DimLine>
              <DimLine>em  Diagr</DimLine>
              <DimLine>llungszeitp</DimLine>
              <DimDivider $mt={24} />
              <DimLine $mt={18} $fs={15} $c="#2f425e" $fw={300}>sdauer all</DimLine>
              <DimChart />
              <DimDivider $mt={-2} $c="#5f5f5f" />
              <DimLine $mt={31} $fs={17} $c="#2f425e" $fw={300}>sungsgüte</DimLine>
            </DimPane>
          </DrawerRow>
          <NavBar>
            <svg width="13" height="15" viewBox="0 0 13 15"><path d="M12 1L1 7.5 12 14Z" fill="none" stroke="#fff" strokeWidth="1.5" /></svg>
            <svg width="14" height="14" viewBox="0 0 14 14"><circle cx="7" cy="7" r="6" fill="none" stroke="#fff" strokeWidth="1.5" /></svg>
            <svg width="13" height="14" viewBox="0 0 13 14"><rect x="1" y="1" width="11" height="12" fill="none" stroke="#fff" strokeWidth="1.5" /></svg>
          </NavBar>
        </AndroidScreen>
        <AndroidBezel $h={68} $pl={98}><SpeakerSlot /></AndroidBezel>
      </AndroidShell>

      <TabletShell>
        <TabletBezel $h={84}><TabletCam /></TabletBezel>
        <TabletScreen>
          <AppHeader />
          <TabletBody>
            <TabletTitle>Prioritätsregeln festlegen</TabletTitle>
            <Para $mt={8} $fs={11.5} $lh={18.3}>Aktuell an einer Maschine abzuarbeitende Aufträge können anhand bestimmter Kriterien priorisiert werden. Sie werden hierzu sortiert, indem die durch die hier definierten Prioritätsregeln (absteigende Reihenfolge) betrachteten Werte miteinander verglichen werden bis sie sich für die jeweiligen Aufträge unterscheiden und somit eine Aussage darüber möglich ist, welcher Auftrag zu bevorzugen ist. Sollte dies nicht möglich sein, entspricht die Auswahl der Prioritätsregel "First come, first serve".</Para>
            <Para $mt={12} $fs={11.5} $lh={18.3} $left>Sie können Ihre Liste an Prioritätsregeln auf dieser Seite entweder über die Buttons für "Hinzufügen" bzw "Löschen" oder direkt über Drag &amp; Drop (Sortieren sowie Hinzufügen/Löschen) bearbeiten.</Para>
            <HintBox $mt={12} $p="5px 10px 9px 6px">
              <HintHead><FaInfoCircle size={11} />Hinweis</HintHead>
              <TabletHintText>Beim Verwenden von Prioritätsregeln wird kein spezifischer zu minimierender Zielfunktionswert vorausgesetzt, da abhängig von der bzw. den gewählte(n) Regel(n) unterschiedliche Werte betrachtet werden und die Regeln darüber hinaus frei kombinierbar sind. Ein womöglich gewählter, zu minimierender Zielfunktionswert würde also ignoriert werden.</TabletHintText>
            </HintBox>
            <ListGrid>
              <div>
                <ListTitle>Gespeicherte Prioritätsregeln (4)</ListTitle>
                <RuleList>
                  {Rules1.map(r => <RuleRow key={r}><span>{r}</span><FaTrash size={11} /></RuleRow>)}
                </RuleList>
              </div>
              <div>
                <ListTitle>Weitere Prioritätsregeln</ListTitle>
                <RuleList>
                  {Rules2.map(r => <RuleRow key={r}><span>{r}</span><CirclePlus size={15} strokeWidth={2.2} /></RuleRow>)}
                </RuleList>
              </div>
            </ListGrid>
          </TabletBody>
          <Snackbar><SnackText>'CR+SPT-Regel' an 4. Stelle hinzugefügt</SnackText><SnackAction>Rückgängig</SnackAction></Snackbar>
        </TabletScreen>
        <TabletBezel $h={84}><HomeRing /></TabletBezel>
      </TabletShell>

      <LaptopLid>
        <LaptopBezel><LaptopScreen><LaptopPage /></LaptopScreen></LaptopBezel>
        <Hinge />
      </LaptopLid>
      <LaptopBase>
        <BaseTop><Notch /></BaseTop>
        <BaseBottom><Pinhole /><Pinhole /></BaseBottom>
      </LaptopBase>
    </Canvas>
  );
}
